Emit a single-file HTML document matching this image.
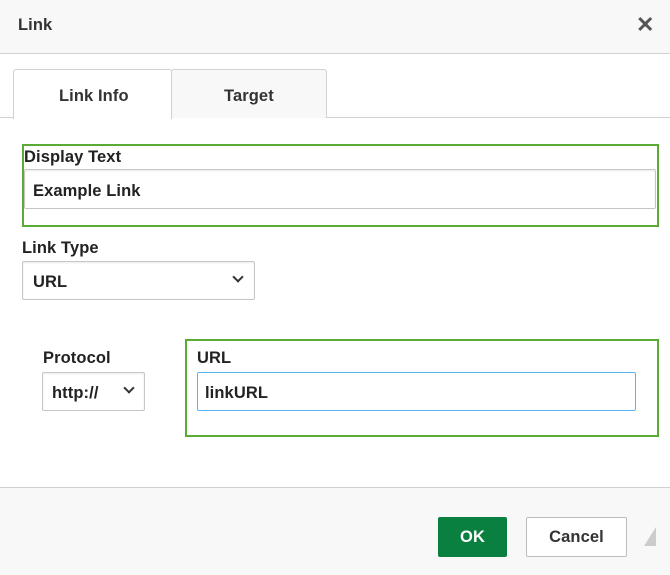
<!DOCTYPE html>
<html><head><meta charset="utf-8"><style>
*{box-sizing:border-box;margin:0;padding:0}
body{width:670px;height:575px;background:#fff;font-family:"Liberation Sans",Arial,sans-serif;color:#222;position:relative;overflow:hidden;font-size:16px}
.a{position:absolute}
.t{font-weight:bold;font-size:16.5px;letter-spacing:0.1px}
.box{position:absolute;border:1px solid #c6c6c6;border-radius:2px;background:#fff;box-shadow:inset 0 1px 2px rgba(0,0,0,.08)}
.chev{position:absolute;width:8px;height:8px;border-right:2px solid #333;border-bottom:2px solid #333;transform:rotate(45deg)}
</style></head><body>
<div class="a" style="left:0;top:0;width:670px;height:54px;background:#f8f8f8;border-bottom:1px solid #d1d1d1"></div>
<div class="a t" style="left:18px;top:16px;color:#333">Link</div>
<div class="a" style="left:636px;top:12px;font-size:22px;font-weight:bold;color:#555">✕</div>

<div class="a" style="left:0;top:117px;width:670px;height:1px;background:#d1d1d1"></div>
<div class="a" style="left:13px;top:69px;width:159px;height:50px;background:#fff;border:1px solid #d1d1d1;border-bottom:none;border-radius:3px 3px 0 0"></div>
<div class="a" style="left:171px;top:69px;width:156px;height:49px;background:#f8f8f8;border:1px solid #d1d1d1;border-bottom:none;border-radius:3px 3px 0 0"></div>
<div class="a t" style="left:59px;top:87px;color:#333">Link Info</div>
<div class="a t" style="left:224px;top:87px;color:#333">Target</div>

<div class="a" style="left:22px;top:144px;width:637px;height:83px;border:2px solid #5aab35"></div>
<div class="a t" style="left:24px;top:148px">Display Text</div>
<div class="box" style="left:24px;top:169px;width:632px;height:40px"></div>
<div class="a t" style="left:33px;top:182px">Example Link</div>

<div class="a t" style="left:22px;top:239px">Link Type</div>
<div class="box" style="left:22px;top:261px;width:233px;height:39px"></div>
<div class="a t" style="left:33px;top:273px">URL</div>
<div class="chev" style="left:234px;top:273px"></div>

<div class="a t" style="left:43px;top:349px">Protocol</div>
<div class="box" style="left:42px;top:372px;width:103px;height:39px"></div>
<div class="a t" style="left:52px;top:384px">http://</div>
<div class="chev" style="left:125px;top:384px"></div>

<div class="a" style="left:185px;top:339px;width:474px;height:98px;border:2px solid #5aab35"></div>
<div class="a t" style="left:197px;top:349px">URL</div>
<div class="a" style="left:197px;top:372px;width:439px;height:39px;border:1px solid #58b5f0;border-radius:2px;background:#fff"></div>
<div class="a t" style="left:205px;top:384px">linkURL</div>

<div class="a" style="left:0;top:487px;width:670px;height:88px;background:#f8f8f8;border-top:1px solid #d1d1d1"></div>
<div class="a t" style="left:438px;top:517px;width:69px;height:40px;background:#09803f;color:#fff;border-radius:2px;text-align:center;line-height:40px">OK</div>
<div class="a t" style="left:526px;top:517px;width:101px;height:40px;background:#fff;border:1px solid #bcbcbc;border-radius:2px;color:#333;text-align:center;line-height:38px">Cancel</div>
<svg class="a" style="left:644px;top:527px" width="12" height="19"><polygon points="12,0 12,19 0,19" fill="#ccc"/></svg>
</body></html>
